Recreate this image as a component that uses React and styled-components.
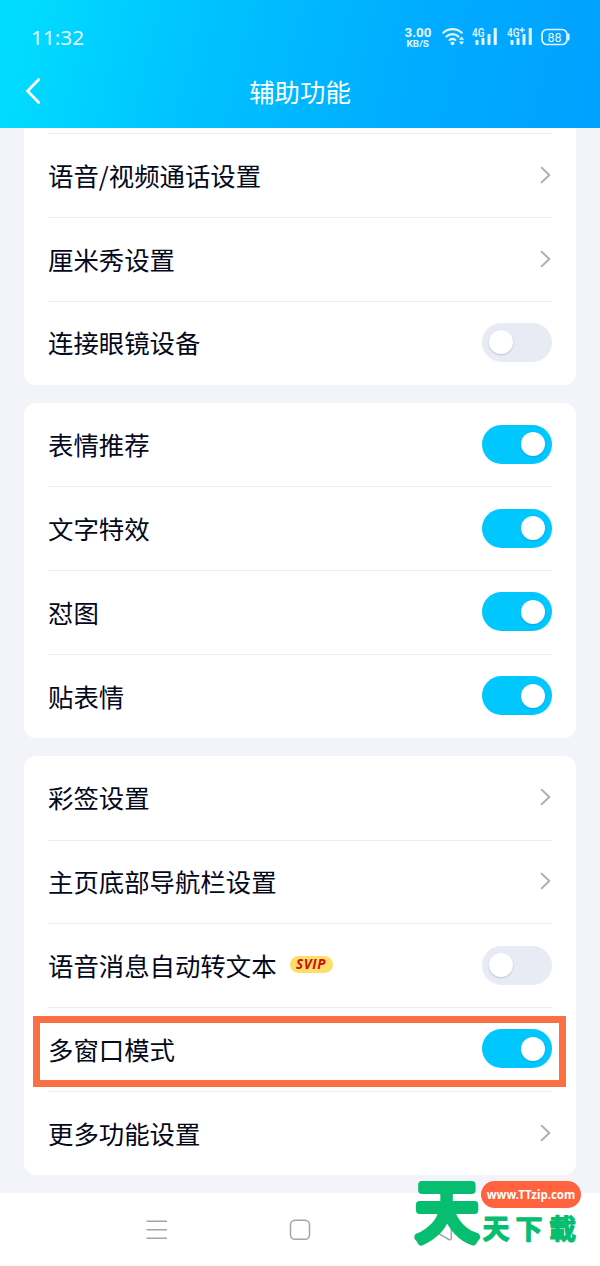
import React from 'react';
import styled, { createGlobalStyle } from 'styled-components';

const GlobalStyle = createGlobalStyle`
  * { box-sizing: border-box; }
  body {
    margin: 0;
    background: #f3f4f9;
    font-family: "Noto Sans CJK SC", "Noto Sans", sans-serif;
    color: #03081a;
  }
`;

const Screen = styled.div`
  width: 600px;
  height: 1266px;
  display: flex;
  flex-direction: column;
  position: relative;
  overflow: hidden;
  background: #f3f4f9;
`;

const Header = styled.header`
  flex: none;
  height: 128px;
  color: #fff;
  background: linear-gradient(103deg, #00dcff 4%, #00c3ff 32%, #00acff 68%, #00a1ff 100%);
`;

const StatusBar = styled.div`
  height: 56px;
  padding: 18px 30px 0 31px;
  display: flex;
  align-items: center;
`;

const Clock = styled.div`
  flex: 1;
  font: 400 20.8px/24px "Noto Sans", sans-serif;
  opacity: 0.9;
`;

const Speed = styled.svg`
  flex: none;
  display: block;
  width: 28px;
  height: 22px;
  margin-right: 10px;
  overflow: visible;
  fill: #fff;
  font-family: Roboto, sans-serif;
  font-weight: 700;
  opacity: 0.9;
`;

const StatusIcon = styled.svg`
  flex: none;
  display: block;
  overflow: visible;
  margin-left: ${(p) => p.$gap || 0}px;
  opacity: 0.9;
`;

const TitleBar = styled.div`
  height: 72px;
  padding: 0 24px;
  display: grid;
  grid-template-columns: 24px 1fr 24px;
  align-items: center;
`;

const Title = styled.h1`
  margin: 0;
  padding-bottom: 2px;
  text-align: center;
  font-size: 25.4px;
  line-height: 36px;
  font-weight: 400;
`;

const Content = styled.main`
  flex: none;
  height: 1064.5px;
  padding: 0 24px;
  display: flex;
  flex-direction: column;
  gap: 18px;
`;

const Card = styled.section`
  padding: ${(p) => (p.$continued ? '5.3px' : '0')} 24px 0;
  background: #fff;
  border-radius: ${(p) => (p.$continued ? '0 0 12px 12px' : '12px')};
`;

const Row = styled.div`
  position: relative;
  height: 83.8px;
  padding-bottom: 0.6px;
  display: flex;
  align-items: center;
  box-shadow: ${(p) => (p.$divided ? 'inset 0 1px #ededf1' : 'none')};
`;

const Label = styled.span`
  font-size: 25.4px;
  line-height: 36px;
  font-weight: 400;
  white-space: nowrap;
`;

const Spacer = styled.span`
  flex: 1;
`;

const Badge = styled.span`
  width: 43px;
  height: 17px;
  margin: -1px 0 0 13px;
  border-radius: 9px;
  background: #ffdd68;
  color: #c6100c;
  font: italic 700 13.4px/17px "Open Sans", sans-serif;
  letter-spacing: 0.7px;
  text-align: center;
`;

const Track = styled.span`
  width: 70.5px;
  height: 39px;
  padding: 0 7.5px;
  border-radius: 20px;
  display: flex;
  align-items: center;
  justify-content: ${(p) => (p.$on ? 'flex-end' : 'flex-start')};
  background: ${(p) => (p.$on ? '#00c8ff' : '#e9ebf4')};
`;

const Knob = styled.span`
  width: 24px;
  height: 24px;
  border-radius: 50%;
  background: #fff;
  box-shadow: 0 1px 2px rgba(20, 50, 90, 0.22);
`;

const Chevron = styled.svg`
  display: block;
  margin-right: 1px;
`;

const Highlight = styled.span`
  position: absolute;
  top: 8.8px;
  left: -15px;
  width: 533px;
  height: 71px;
  border: 7px solid #fa7043;
  pointer-events: none;
`;

const NavBar = styled.nav`
  flex: 1;
  background: #fff;
  padding: 26px 146px 0;
  display: flex;
  justify-content: space-between;
  align-items: flex-start;
`;

const Watermark = styled.div`
  position: absolute;
  left: 410px;
  top: 1174px;
  width: 175px;
  height: 76px;
`;

const Mark = styled.svg`
  display: block;
  overflow: visible;
  fill: #06bd70;
  stroke: #06bd70;
  stroke-linejoin: round;
  stroke-linecap: round;
`;

const SitePill = styled.span`
  position: absolute;
  left: 71px;
  top: 7px;
  width: 100px;
  height: 27px;
  border-radius: 14px;
  background: #ff623c;
  color: #fff;
  font: 700 11.5px/27px "Noto Sans", sans-serif;
  text-align: center;
`;

function Toggle({ on }) {
  return (
    <Track $on={on}>
      <Knob />
    </Track>
  );
}

function Arrow() {
  return (
    <Chevron width="11" height="18" viewBox="0 0 11 18" fill="none" stroke="#b0b0b8" strokeWidth="2" strokeLinecap="round" strokeLinejoin="round">
      <path d="M1.7 1.7 9.3 9 1.7 16.3" />
    </Chevron>
  );
}

function Signal({ plus, gap }) {
  return (
    <StatusIcon $gap={gap} width="25" height="20" viewBox="0 0 25 20" fill="#fff">
      <text x="0" y="10" fontFamily="Roboto, sans-serif" fontSize="12" fontWeight="500" textLength="12.5" lengthAdjust="spacingAndGlyphs">4G</text>
      {plus && <path d="M14.5 .5h1.4v1.8h1.8v1.4h-1.8v1.8h-1.4V3.7h-1.8V2.3h1.8z" />}
      <rect x="3.5" y="13" width="3" height="5" rx=".7" />
      <rect x="9.5" y="11" width="3" height="7" rx=".7" />
      <rect x="15.5" y="7" width="3" height="11" rx=".7" />
      <rect x="21.7" y="1" width="3.1" height="17" rx=".7" />
    </StatusIcon>
  );
}

const groups = [
  [
    { label: '语音/视频通话设置' },
    { label: '厘米秀设置' },
    { label: '连接眼镜设备', toggle: true, on: false },
  ],
  [
    { label: '表情推荐', toggle: true, on: true },
    { label: '文字特效', toggle: true, on: true },
    { label: '怼图', toggle: true, on: true },
    { label: '贴表情', toggle: true, on: true },
  ],
  [
    { label: '彩签设置' },
    { label: '主页底部导航栏设置' },
    { label: '语音消息自动转文本', badge: 'SVIP', toggle: true, on: false },
    { label: '多窗口模式', toggle: true, on: true, highlighted: true },
    { label: '更多功能设置' },
  ],
];

export default function App() {
  return (
    <Screen>
      <GlobalStyle />
      <Header>
        <StatusBar>
          <Clock>11:32</Clock>
          <Speed viewBox="0 0 28 22">
            <text x="0.5" y="11" fontSize="13.5" textLength="27" lengthAdjust="spacingAndGlyphs">3.00</text>
            <text x="2.5" y="20.5" fontSize="9.5" textLength="22.5" lengthAdjust="spacingAndGlyphs">KB/S</text>
          </Speed>
          <StatusIcon width="23" height="20" viewBox="0 0 23 20" fill="none" stroke="#fff" strokeWidth="2.2" strokeLinecap="round">
            <path d="M1.3 5.7a13.5 13.5 0 0 1 18.4 0M4.5 9.5a9 9 0 0 1 12 0M7.6 13a4.6 4.6 0 0 1 5.8 0" />
            <circle cx="10.5" cy="16.3" r="1.9" fill="#fff" stroke="none" />
            <path d="m16.8 12.7 2.7-3.3 2.7 3.3zM16.8 14.500l2.7 3.3 2.7-3.3z" fill="#fff" stroke="none" />
          </StatusIcon>
          <Signal gap={7.5} />
          <Signal plus gap={9.5} />
          <StatusIcon $gap={9.5} width="29" height="18" viewBox="0 0 29 18" fill="none" stroke="#fff">
            <rect x="1" y="1.5" width="25" height="15" rx="5" strokeWidth="1.7" />
            <path d="M27.500 6.500v5" strokeWidth="2" strokeLinecap="round" />
            <text x="6.5" y="13.7" textLength="14" lengthAdjust="spacingAndGlyphs" fontFamily="Roboto, sans-serif" fontSize="13.5" fill="#fff" stroke="none">88</text>
          </StatusIcon>
        </StatusBar>
        <TitleBar>
          <svg width="20" height="30" viewBox="0 0 20 30" fill="none" stroke="#fff" strokeWidth="2.8" strokeLinecap="round" strokeLinejoin="round">
            <path d="M14.700 2.500 3.500 14 14.700 25.500" />
          </svg>
          <Title>辅助功能</Title>
        </TitleBar>
      </Header>
      <Content>
        {groups.map((rows, g) => (
          <Card key={g} $continued={g === 0}>
            {rows.map((row, i) => (
              <Row key={row.label} $divided={g === 0 || i > 0}>
                <Label>{row.label}</Label>
                {row.badge && <Badge>{row.badge}</Badge>}
                <Spacer />
                {row.toggle ? <Toggle on={row.on} /> : <Arrow />}
                {row.highlighted && <Highlight />}
              </Row>
            ))}
          </Card>
        ))}
      </Content>
      <NavBar>
        <svg width="22" height="22" viewBox="0 0 22 22" stroke="#a5a5a5" strokeWidth="1.5">
          <path d="M.5 2.300h20.500M.5 10.800h20.500M.5 19.200h20.500" />
        </svg>
        <svg width="22" height="22" viewBox="0 0 22 22" fill="none" stroke="#a5a5a5" strokeWidth="1.5">
          <rect x="1.5" y="1.2" width="19" height="19" rx="4.5" />
        </svg>
        <svg width="22" height="22" viewBox="0 0 22 22" fill="none" stroke="#a5a5a5" strokeWidth="1.5" strokeLinejoin="round">
          <path d="M18.500 1.800 2.300 10q-1.500.9 0 1.800l14.500 8.700q2.200.8 2.500-1.200V3q0-1-.8-1.200z" />
        </svg>
      </NavBar>
      <Watermark>
        <Mark width="175" height="76" viewBox="0 0 175 76" fontFamily="'Noto Sans CJK TC', sans-serif">
          <text transform="translate(5.5 61.500) scale(1 1.060)" fontSize="63" fontWeight="400" strokeWidth="7.5">天</text>
          <text x="72.5 105.5 139" y="65" fontSize="27" fontWeight="700" strokeWidth="1.2">天下載</text>
        </Mark>
        <SitePill>www.TTzip.com</SitePill>
      </Watermark>
    </Screen>
  );
}
